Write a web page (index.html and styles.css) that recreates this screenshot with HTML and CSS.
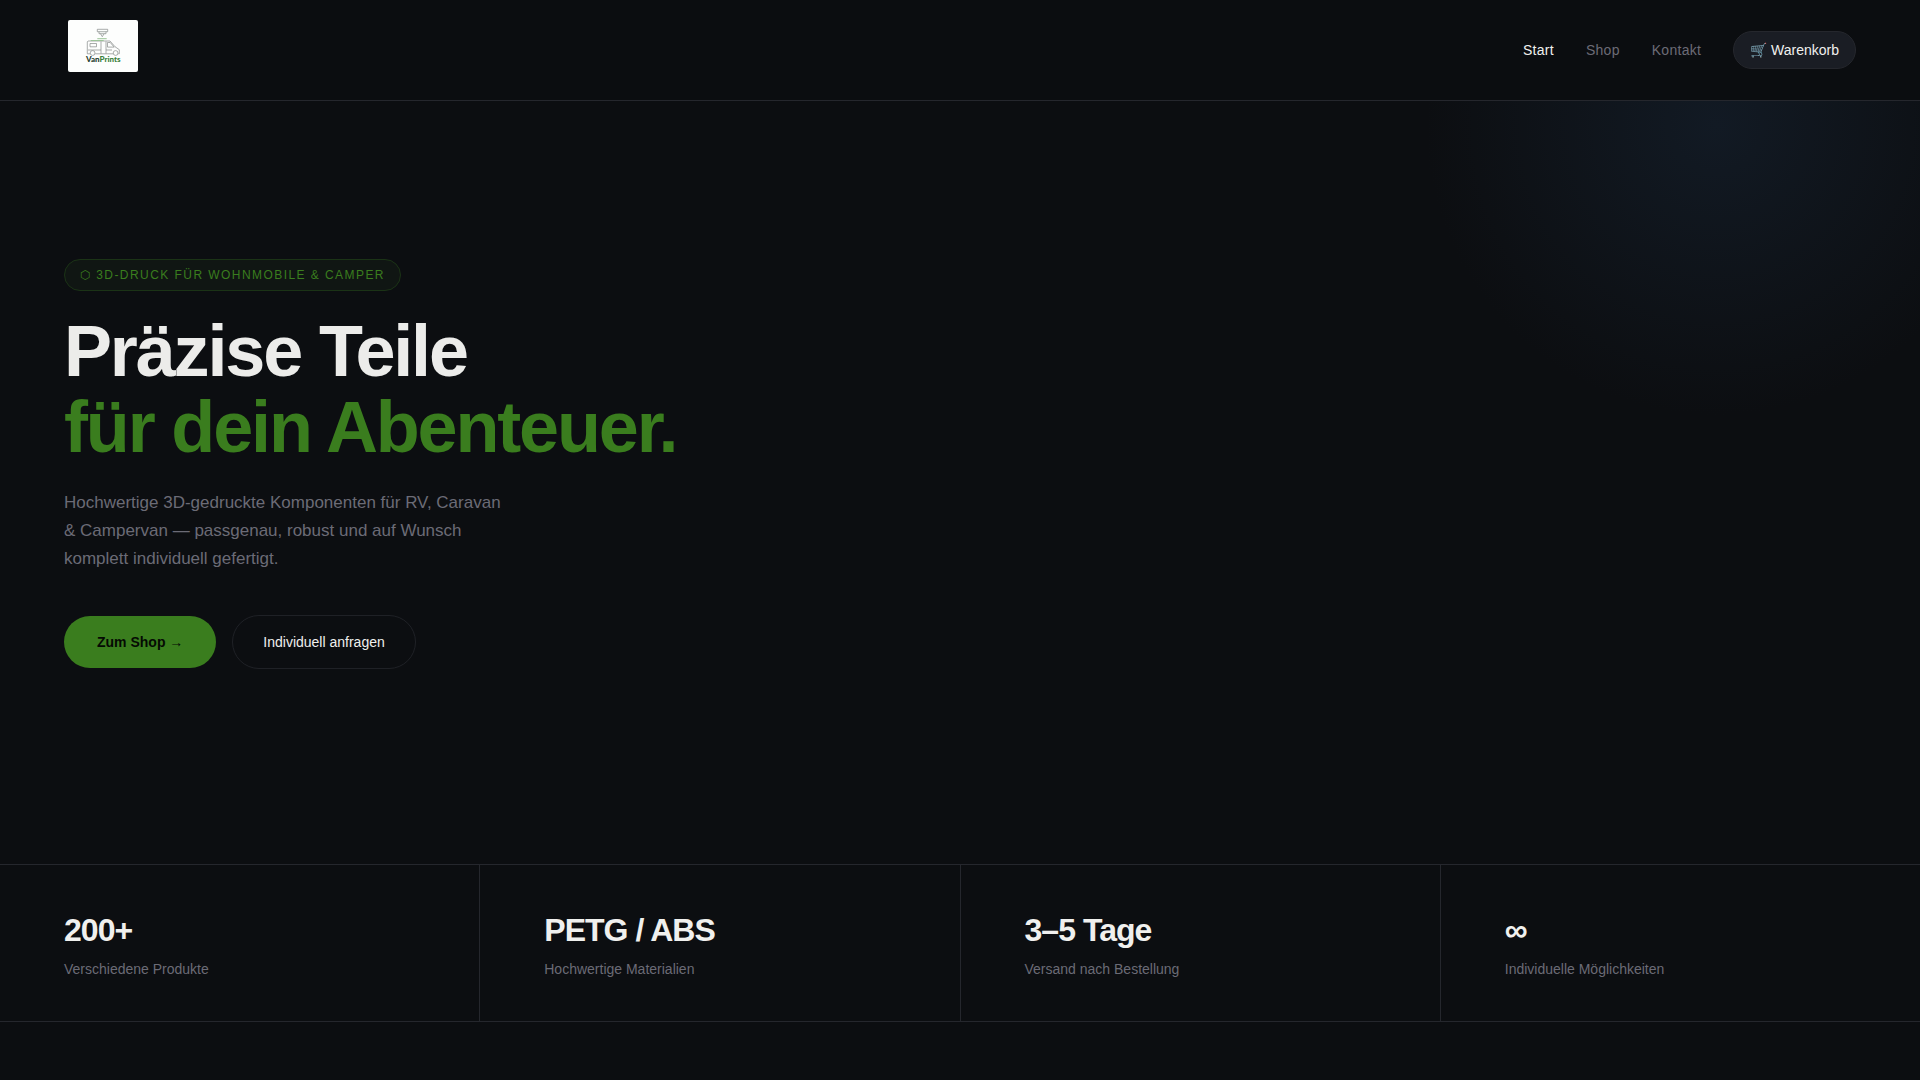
FILE: index.html
```html
<!DOCTYPE html>
<html lang="de">
<head>
<meta charset="utf-8">
<meta name="viewport" content="width=device-width, initial-scale=1">
<title>VanPrints</title>
<link rel="stylesheet" href="styles.css">
</head>
<body>
<header class="site-header">
  <a class="logo" href="#" aria-label="VanPrints">
    <svg class="logo-image" viewBox="0 0 70 52" role="img" aria-label="VanPrints">
      <rect width="70" height="52" fill="#fdfefd"/>
      <g fill="none" stroke="#858a88" stroke-width=".7" stroke-linejoin="round">
        <path d="M29.300 9.300h10.400v2.400h-10.400zM31 11.700v2h7v-2M32.500 13.700l1.800 3 1.800-3"/>
        <path d="M22 33.800h-2.700v-12l.7-.8h22l5 5.700 4.300 3v4.100h-1M27.200 33.800h18"/>
        <path d="M22 23.500h6.500v3.300h-6.500zM33 21.500v12M38 21.500v12M39.500 22.500h2.700l4 4.600h-6.700zM20 30h13M38 30h6"/>
        <circle cx="24.600" cy="33" r="2.400"/><circle cx="47.600" cy="33" r="2.400"/>
      </g>
      <path d="M29.300 18.700h9.400M22.700 20.500h13" stroke="#9cc498" stroke-width="1"/>
      <text class="logo-text" x="18" y="42"><tspan fill="#26402f">Van</tspan><tspan fill="#37803a">Prints</tspan></text>
    </svg>
  </a>
  <nav class="nav">
    <a class="nav-link nav-link-active" href="#">Start</a>
    <a class="nav-link" href="#">Shop</a>
    <a class="nav-link" href="#">Kontakt</a>
    <button class="cart-button" type="button">🛒 Warenkorb</button>
  </nav>
</header>
<main>
  <section class="hero">
    <span class="badge">⬡ 3D-Druck für Wohnmobile &amp; Camper</span>
    <h1 class="hero-title">Präzise Teile<br><span class="accent">für dein Abenteuer.</span></h1>
    <p class="hero-text">Hochwertige 3D-gedruckte Komponenten für RV, Caravan &amp; Campervan — passgenau, robust und auf Wunsch komplett individuell gefertigt.</p>
    <div class="hero-actions">
      <button class="button button-primary" type="button">Zum Shop →</button>
      <button class="button button-outline" type="button">Individuell anfragen</button>
    </div>
  </section>
  <section class="stats">
    <div class="stat"><div class="stat-value">200+</div><div class="stat-label">Verschiedene Produkte</div></div>
    <div class="stat"><div class="stat-value">PETG / ABS</div><div class="stat-label">Hochwertige Materialien</div></div>
    <div class="stat"><div class="stat-value">3–5 Tage</div><div class="stat-label">Versand nach Bestellung</div></div>
    <div class="stat"><div class="stat-value">∞</div><div class="stat-label">Individuelle Möglichkeiten</div></div>
  </section>
</main>
</body>
</html>
```
FILE: styles.css
```css
:root {
  --bg: #0c0e11;
  --line: #25272d;
  --text: #f0f0ee;
  --muted: #6b6b76;
  --green: #3a7d1e;
}
* { box-sizing: border-box; }
body {
  margin: 0;
  background: var(--bg);
  color: var(--text);
  font-family: "Liberation Sans", Arial, sans-serif;
}
button { font-family: inherit; cursor: pointer; }
.site-header {
  display: flex;
  align-items: center;
  justify-content: space-between;
  padding: 20px 64px 28px 68px;
  border-bottom: 1px solid var(--line);
  background: #0b0d10;
}
.logo { display: block; }
.logo-image { display: block; width: 70px; height: 52px; border-radius: 2px; }
.logo-text { font: 900 8px Lato, sans-serif; }
.nav {
  display: flex;
  align-items: center;
  gap: 32px;
  margin-top: 8px;
}
.nav-link {
  color: var(--muted);
  font-size: 14px;
  letter-spacing: 0.02em;
  text-decoration: none;
}
.nav-link-active { color: var(--text); }
.cart-button {
  height: 38px;
  padding: 0 16px;
  border: 1px solid var(--line);
  border-radius: 19px;
  background: #1a1d24;
  color: var(--text);
  font-size: 14px;
}
.hero {
  display: flex;
  flex-direction: column;
  align-items: flex-start;
  padding: 158px 64px 195px;
  background: radial-gradient(circle 290px at calc(100% - 204px) 24px, #121a24, var(--bg));
}
.badge {
  padding: 0 15px;
  border: 1px solid #1b3316;
  border-radius: 16px;
  background: #101613;
  color: var(--green);
  font-size: 12px;
  line-height: 30px;
  letter-spacing: 0.12em;
  text-transform: uppercase;
}
.hero-title {
  margin: 22px 0 24px;
  color: #ececea;
  font-size: 72px;
  line-height: 76px;
  letter-spacing: -0.03em;
}
.accent { color: var(--green); }
.hero-text {
  max-width: 440px;
  margin: 0 0 42px;
  color: var(--muted);
  font-size: 17px;
  line-height: 28px;
}
.hero-actions { display: flex; align-items: center; gap: 16px; }
.button { border-radius: 27px; font-size: 14px; }
.button-primary {
  height: 52px;
  padding: 0 33px;
  border: 0;
  background: var(--green);
  color: #050a03;
  font-weight: bold;
}
.button-outline {
  height: 54px;
  padding: 0 30px;
  border: 1px solid #1f2126;
  background: transparent;
  color: var(--text);
}
.stats {
  display: grid;
  grid-template-columns: repeat(4, 1fr);
  gap: 1px;
  border-top: 1px solid var(--line);
  border-bottom: 1px solid var(--line);
  background: var(--line);
}
.stat { padding: 47px 64px 44px; background: var(--bg); }
.stat-value {
  font-size: 32px;
  font-weight: bold;
  line-height: 36px;
  letter-spacing: -0.03em;
}
.stat-label {
  margin-top: 13px;
  color: var(--muted);
  font-size: 14px;
  line-height: 16px;
}
```
